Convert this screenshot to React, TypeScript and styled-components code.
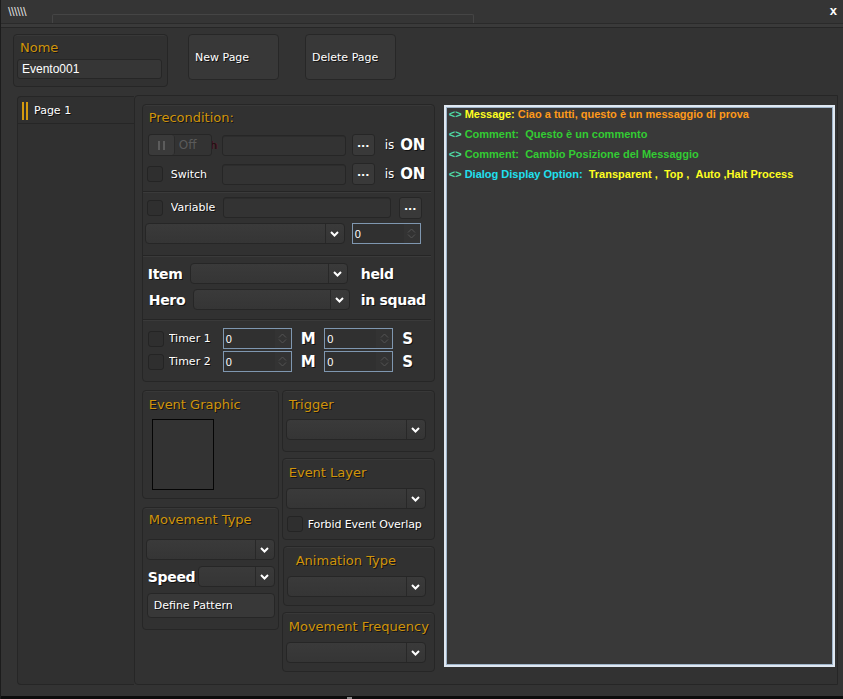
import React from "react";
import styled, { createGlobalStyle } from "styled-components";

const Global = createGlobalStyle`
  html, body {
    margin: 0;
    padding: 0;
    background: #333333;
  }
  body {
    font-family: "DejaVu Sans", Tahoma, sans-serif;
    font-size: 12px;
    color: #f0f0f0;
  }
`;

const Window = styled.div`
  width: 843px;
  height: 699px;
  background: #333333;
  border-left: 1px solid #1c1c1c;
  box-sizing: border-box;
  display: flex;
  flex-direction: column;
  position: relative;
  overflow: hidden;
`;

const TitleBar = styled.div`
  height: 23px;
  background: #353535;
  border-bottom: 1px solid #2a2a2a;
  display: flex;
  align-items: flex-start;
`;

const Grip = styled.span`
  margin: 5px 0 0 7px;
  font-family: "Liberation Sans", Arial, sans-serif;
  font-size: 13px;
  line-height: 13px;
  color: #d8d8d8;
  letter-spacing: -0.6px;
`;

const TabGhost = styled.div`
  margin: 14px 0 0 26px;
  width: 422px;
  height: 9px;
  border: 1px solid #454545;
  border-bottom: none;
  border-radius: 2px 2px 0 0;
  box-sizing: border-box;
`;

const Close = styled.span`
  margin: 3px 6px 0 auto;
  font-family: "Liberation Sans", Arial, sans-serif;
  font-weight: bold;
  font-size: 13px;
  color: #ffffff;
`;

const Strip = styled.div`
  height: 3px;
  background: #3a3a3a;
  border-bottom: 1px solid #262626;
`;

const Body = styled.div`
  flex: 1;
  padding: 6px 5px 0 12px;
  display: flex;
  flex-direction: column;
  border-bottom: 3px solid #0c0c0c;
  position: relative;
`;

const Notch = styled.span`
  position: absolute;
  left: 346px;
  bottom: -3px;
  width: 5px;
  height: 2px;
  background: #8a8a8a;
`;

const TopRow = styled.div`
  display: flex;
  align-items: flex-start;
  height: 62px;
`;

const Panel = styled.div<{ $w?: number; $h?: number }>`
  width: ${(p) => (p.$w ? `${p.$w}px` : "auto")};
  height: ${(p) => (p.$h ? `${p.$h}px` : "auto")};
  box-sizing: border-box;
  background: #313131;
  border: 1px solid #262626;
  border-radius: 4px;
  box-shadow: inset 0 1px 0 #383838;
`;

const Title = styled.div<{ $indent?: number }>`
  color: #cf940c;
  font-size: 13px;
  line-height: 16px;
  padding-left: ${(p) => p.$indent ?? 6}px;
  text-shadow: 1px 1px 0 #141414;
  white-space: nowrap;
`;

const NomePanel = styled(Panel)`
  padding-top: 5px;
`;

const NameInput = styled.div`
  margin: 3px 0 0 3px;
  width: 145px;
  height: 20px;
  box-sizing: border-box;
  background: #363636;
  border: 1px solid #262626;
  border-radius: 3px;
  padding-left: 4px;
  font-family: "Liberation Sans", Arial, sans-serif;
  font-size: 12px;
  line-height: 18px;
  color: #ffffff;
`;

const BigButton = styled.div<{ $ml: number }>`
  margin-left: ${(p) => p.$ml}px;
  width: 91px;
  height: 46px;
  box-sizing: border-box;
  background: #383838;
  border: 1px solid #272727;
  border-radius: 4px;
  display: flex;
  align-items: center;
  padding-left: 6px;
  font-size: 11px;
  color: #ffffff;
  text-shadow: 1px 1px 0 #111;
`;

const Lower = styled.div`
  display: flex;
  height: 589px;
`;

const PageList = styled.div`
  margin-left: 4px;
  width: 117px;
  box-sizing: border-box;
  background: #303030;
  border: 1px solid #262626;
  border-right: none;
  border-radius: 4px 0 0 4px;
  padding-top: 1px;
`;

const PageItem = styled.div`
  height: 25px;
  border-bottom: 1px solid #262626;
  display: flex;
  align-items: center;
  padding-left: 4px;
  gap: 6px;
  font-size: 11px;
  color: #ffffff;
  text-shadow: 1px 1px 0 #111;
`;

const Bars = styled.span`
  width: 6px;
  height: 18px;
  border-left: 2px solid #d49a0e;
  border-right: 2px solid #d49a0e;
  box-sizing: border-box;
`;

const Main = styled.div`
  width: 706px;
  box-sizing: border-box;
  background: #323232;
  border: 1px solid #262626;
  border-radius: 4px 0 0 4px;
  margin-top: -1px;
  padding: 8px 0 0 7px;
  display: flex;
  gap: 8px;
`;

const LeftCol = styled.div`
  width: 294px;
  display: flex;
  flex-direction: column;
`;

const PrePanel = styled(Panel)`
  width: 293px;
  height: 278px;
  padding-top: 5px;
`;

const Section = styled.div<{ $pt: number; $pb: number; $gap: number; $line?: boolean }>`
  padding: ${(p) => p.$pt}px 0 ${(p) => p.$pb}px 0;
  display: flex;
  flex-direction: column;
  gap: ${(p) => p.$gap}px;
  border-bottom: ${(p) => (p.$line ? "1px solid #252525" : "none")};
  box-shadow: ${(p) => (p.$line ? "0 1px 0 #3a3a3a" : "none")};
  margin: 0 3px 0 0;
`;

const Row = styled.div<{ $h?: number; $pl?: number }>`
  height: ${(p) => p.$h ?? 21}px;
  display: flex;
  align-items: center;
  padding-left: ${(p) => p.$pl ?? 4}px;
  position: relative;
`;

const Check = styled.span<{ $ml?: number; $hidden?: boolean }>`
  margin-left: ${(p) => p.$ml ?? 0}px;
  width: 16px;
  height: 16px;
  box-sizing: border-box;
  background: #2f2f2f;
  border: 1px solid #242424;
  border-radius: 3px;
  flex: none;
  visibility: ${(p) => (p.$hidden ? "hidden" : "visible")};
`;

const Label = styled.span<{ $w: number; $dark?: boolean; $indent?: number }>`
  width: ${(p) => p.$w}px;
  flex: none;
  box-sizing: border-box;
  padding-left: ${(p) => p.$indent ?? 0}px;
  font-size: 11px;
  color: ${(p) => (p.$dark ? "#1c1010" : "#ffffff")};
  text-shadow: ${(p) => (p.$dark ? "1px 0 0 #5a1020" : "1px 1px 0 #111")};
  white-space: nowrap;
  overflow: hidden;
`;

const Bold = styled.span<{ $w?: number; $size?: number }>`
  width: ${(p) => (p.$w ? `${p.$w}px` : "auto")};
  flex: none;
  font-family: "DejaVu Sans", Tahoma, sans-serif;
  font-weight: bold;
  font-size: ${(p) => p.$size ?? 14}px;
  color: #ffffff;
  text-shadow: 1px 1px 0 #111;
  white-space: nowrap;
  letter-spacing: -0.3px;
`;

const Field = styled.span<{ $w: number }>`
  width: ${(p) => p.$w}px;
  height: 21px;
  flex: none;
  box-sizing: border-box;
  background: #333333;
  border: 1px solid #262626;
  border-radius: 3px;
  box-shadow: inset 0 1px 0 #2c2c2c;
`;

const Dots = styled.span<{ $ml: number }>`
  margin-left: ${(p) => p.$ml}px;
  width: 23px;
  height: 22px;
  flex: none;
  box-sizing: border-box;
  background: #393939;
  border: 1px solid #262626;
  border-radius: 3px;
  color: #ffffff;
  font-weight: bold;
  font-size: 11px;
  display: flex;
  align-items: center;
  justify-content: center;
  padding-bottom: 3px;
`;

const Is = styled.span<{ $ml: number }>`
  margin-left: ${(p) => p.$ml}px;
  font-size: 12px;
  color: #ffffff;
  text-shadow: 1px 1px 0 #111;
  margin-right: 6px;
`;

const Toggle = styled.div`
  position: absolute;
  left: 5px;
  top: 0;
  width: 64px;
  height: 22px;
  box-sizing: border-box;
  background: #333333;
  border: 1px solid #262626;
  border-radius: 3px;
  display: flex;
  align-items: center;
`;

const Knob = styled.span`
  width: 26px;
  height: 20px;
  box-sizing: border-box;
  background: #3a3a3a;
  border-right: 1px solid #2a2a2a;
  border-radius: 3px;
  display: flex;
  align-items: center;
  justify-content: center;
  gap: 3px;
`;

const KnobBar = styled.span`
  width: 2px;
  height: 9px;
  background: #5c5c5c;
`;

const OffText = styled.span`
  margin-left: 4px;
  font-size: 12px;
  color: #5a5a5a;
`;

const Select = styled.div<{ $w: number; $ml?: number }>`
  margin-left: ${(p) => p.$ml ?? 0}px;
  width: ${(p) => p.$w}px;
  height: 21px;
  flex: none;
  box-sizing: border-box;
  background: linear-gradient(#3a3a3a, #353535);
  border: 1px solid #262626;
  border-radius: 4px;
  display: flex;
  justify-content: flex-end;
`;

const Arrow = styled.span`
  width: 18px;
  border-left: 1px solid #282828;
  display: flex;
  align-items: center;
  justify-content: center;
`;

const Spin = styled.div<{ $w?: number; $ml?: number }>`
  margin-left: ${(p) => p.$ml ?? 0}px;
  width: ${(p) => p.$w ?? 69}px;
  height: 21px;
  flex: none;
  box-sizing: border-box;
  background: #303030;
  border: 1px solid #7f97b0;
  display: flex;
  align-items: center;
  justify-content: space-between;
  padding-left: 2px;
  font-family: "Liberation Sans", Arial, sans-serif;
  font-size: 11px;
  color: #ffffff;
`;

const SpinBtns = styled.span`
  width: 16px;
  height: 19px;
  display: flex;
  flex-direction: column;
  align-items: center;
  justify-content: center;
  gap: 1px;
  background: #333;
`;

const Unit = styled(Bold)<{ $ml: number }>`
  margin-left: ${(p) => p.$ml}px;
  font-size: 15px;
`;

const BottomGrid = styled.div`
  margin-top: 8px;
  display: grid;
  grid-template-columns: 137px 153px;
  column-gap: 3px;
  align-items: start;
`;

const Stack = styled.div<{ $gap: number }>`
  display: flex;
  flex-direction: column;
  gap: ${(p) => p.$gap}px;
`;

const Box = styled(Panel)<{ $pt?: number }>`
  padding-top: ${(p) => p.$pt ?? 6}px;
  display: flex;
  flex-direction: column;
`;

const GraphicFrame = styled.div`
  margin: 6px 0 0 9px;
  width: 62px;
  height: 71px;
  box-sizing: border-box;
  border: 1px solid #050505;
  background: #333333;
`;

const BoxRow = styled.div<{ $mt: number; $pl?: number }>`
  margin-top: ${(p) => p.$mt}px;
  padding-left: ${(p) => p.$pl ?? 3}px;
  display: flex;
  align-items: center;
`;

const SmallText = styled.span<{ $ml?: number }>`
  margin-left: ${(p) => p.$ml ?? 0}px;
  font-size: 11px;
  color: #ffffff;
  text-shadow: 1px 1px 0 #111;
  white-space: nowrap;
  letter-spacing: -0.1px;
`;

const PatternBtn = styled.div`
  margin: 6px 0 0 4px;
  width: 128px;
  height: 25px;
  box-sizing: border-box;
  background: #383838;
  border: 1px solid #262626;
  border-radius: 4px;
  display: flex;
  align-items: center;
  padding-left: 6px;
  font-size: 11px;
  color: #ffffff;
  text-shadow: 1px 1px 0 #111;
`;

const EventList = styled.div`
  margin-top: 1px;
  width: 391px;
  height: 562px;
  box-sizing: border-box;
  background: #393939;
  border: 2px solid #dfe8f2;
  box-shadow: inset 0 0 0 1px #9fb4c9;
  padding: 0 0 0 3px;
  font-family: "Liberation Sans", Arial, sans-serif;
  font-weight: bold;
  font-size: 11px;
  line-height: 14px;
`;

const Line = styled.div`
  height: 20px;
  white-space: nowrap;
`;

const C = styled.span<{ $c: string }>`
  color: ${(p) => p.$c};
`;

const Chevron = () => (
  <svg width="9" height="6" viewBox="0 0 9 6">
    <path d="M1 1 L4.5 4.5 L8 1" stroke="#ffffff" strokeWidth="2" fill="none" />
  </svg>
);

const SpinArrows = () => (
  <SpinBtns>
    <svg width="9" height="5" viewBox="0 0 9 5">
      <path d="M1 4.5 L4.5 1 L8 4.5" stroke="#555" strokeWidth="1" fill="none" />
    </svg>
    <svg width="9" height="5" viewBox="0 0 9 5">
      <path d="M1 0.5 L4.5 4 L8 0.5" stroke="#555" strokeWidth="1" fill="none" />
    </svg>
  </SpinBtns>
);

const Dropdown = ({ w, ml }: { w: number; ml?: number }) => (
  <Select $w={w} $ml={ml}>
    <Arrow>
      <Chevron />
    </Arrow>
  </Select>
);

const Arrows = () => <C $c="#50d8a8">{"<>"} </C>;

export default function App() {
  return (
    <>
      <Global />
      <Window>
        <TitleBar>
          <Grip>\\\\\\</Grip>
          <TabGhost />
          <Close>x</Close>
        </TitleBar>
        <Strip />
        <Body>
          <TopRow>
            <NomePanel $w={155} $h={53}>
              <Title>Nome</Title>
              <NameInput>Evento001</NameInput>
            </NomePanel>
            <BigButton $ml={20}>New Page</BigButton>
            <BigButton $ml={26}>Delete Page</BigButton>
          </TopRow>
          <Lower>
            <PageList>
              <PageItem>
                <Bars />
                Page 1
              </PageItem>
            </PageList>
            <Main>
              <LeftCol>
                <PrePanel>
                  <Title>Precondition:</Title>
                  <Section $pt={8} $pb={6} $gap={7} $line>
                    <Row $h={22}>
                      <Check $hidden />
                      <Label $w={51} $dark $indent={10} style={{ marginLeft: 8 }}>
                        Switch
                      </Label>
                      <Toggle>
                        <Knob>
                          <KnobBar />
                          <KnobBar />
                        </Knob>
                        <OffText>Off</OffText>
                      </Toggle>
                      <Field $w={124} />
                      <Dots $ml={6}>...</Dots>
                      <Is $ml={10}>is</Is>
                      <Bold $size={15}>ON</Bold>
                    </Row>
                    <Row $h={22}>
                      <Check />
                      <Label $w={51} style={{ marginLeft: 8 }}>
                        Switch
                      </Label>
                      <Field $w={124} />
                      <Dots $ml={6}>...</Dots>
                      <Is $ml={10}>is</Is>
                      <Bold $size={15}>ON</Bold>
                    </Row>
                  </Section>
                  <Section $pt={5} $pb={11} $gap={5} $line>
                    <Row>
                      <Check />
                      <Label $w={52} style={{ marginLeft: 8 }}>
                        Variable
                      </Label>
                      <Field $w={168} />
                      <Dots $ml={8}>...</Dots>
                    </Row>
                    <Row $pl={2}>
                      <Dropdown w={200} />
                      <Spin $ml={7} $w={69}>
                        0
                        <SpinArrows />
                      </Spin>
                    </Row>
                  </Section>
                  <Section $pt={7} $pb={9} $gap={5} $line>
                    <Row $pl={5}>
                      <Bold $w={42}>Item</Bold>
                      <Dropdown w={158} />
                      <Bold $size={14} style={{ marginLeft: 13 }}>
                        held
                      </Bold>
                    </Row>
                    <Row $pl={6}>
                      <Bold $w={44}>Hero</Bold>
                      <Dropdown w={157} />
                      <Bold $size={14} style={{ marginLeft: 11 }}>
                        in squad
                      </Bold>
                    </Row>
                  </Section>
                  <Section $pt={8} $pb={0} $gap={2}>
                    <Row $pl={5}>
                      <Check />
                      <Label $w={54} style={{ marginLeft: 5 }}>
                        Timer 1
                      </Label>
                      <Spin>
                        0
                        <SpinArrows />
                      </Spin>
                      <Unit $ml={9}>M</Unit>
                      <Spin $ml={9}>
                        0
                        <SpinArrows />
                      </Spin>
                      <Unit $ml={9}>S</Unit>
                    </Row>
                    <Row $pl={5}>
                      <Check />
                      <Label $w={54} style={{ marginLeft: 5 }}>
                        Timer 2
                      </Label>
                      <Spin>
                        0
                        <SpinArrows />
                      </Spin>
                      <Unit $ml={9}>M</Unit>
                      <Spin $ml={9}>
                        0
                        <SpinArrows />
                      </Spin>
                      <Unit $ml={9}>S</Unit>
                    </Row>
                  </Section>
                </PrePanel>
                <BottomGrid>
                  <Stack $gap={8}>
                    <Box $h={109}>
                      <Title>Event Graphic</Title>
                      <GraphicFrame />
                    </Box>
                    <Box $h={123} $pt={4}>
                      <Title>Movement Type</Title>
                      <BoxRow $mt={11}>
                        <Dropdown w={129} />
                      </BoxRow>
                      <BoxRow $mt={6} $pl={5}>
                        <Bold $w={50}>Speed</Bold>
                        <Dropdown w={77} />
                      </BoxRow>
                      <PatternBtn>Define Pattern</PatternBtn>
                    </Box>
                  </Stack>
                  <Stack $gap={6}>
                    <Box $h={62}>
                      <Title>Trigger</Title>
                      <BoxRow $mt={6}>
                        <Dropdown w={140} />
                      </BoxRow>
                    </Box>
                    <Box $h={82}>
                      <Title>Event Layer</Title>
                      <BoxRow $mt={7}>
                        <Dropdown w={140} />
                      </BoxRow>
                      <BoxRow $mt={7} $pl={4}>
                        <Check />
                        <SmallText $ml={5}>Forbid Event Overlap</SmallText>
                      </BoxRow>
                    </Box>
                    <Box $h={60} style={{ marginLeft: 1 }}>
                      <Title $indent={12}>Animation Type</Title>
                      <BoxRow $mt={7}>
                        <Dropdown w={139} />
                      </BoxRow>
                    </Box>
                    <Box $h={60}>
                      <Title>Movement Frequency</Title>
                      <BoxRow $mt={7}>
                        <Dropdown w={140} />
                      </BoxRow>
                    </Box>
                  </Stack>
                </BottomGrid>
              </LeftCol>
              <EventList>
                <Line>
                  <Arrows />
                  <C $c="#ffff20">Message: </C>
                  <C $c="#ff9a1a">Ciao a tutti, questo è un messaggio di prova</C>
                </Line>
                <Line>
                  <Arrows />
                  <C $c="#33cc33">Comment: &nbsp;Questo è un commento</C>
                </Line>
                <Line>
                  <Arrows />
                  <C $c="#33cc33">Comment: &nbsp;Cambio Posizione del Messaggio</C>
                </Line>
                <Line>
                  <Arrows />
                  <C $c="#20e0f0">Dialog Display Option: &nbsp;</C>
                  <C $c="#ffff20">Transparent , &nbsp;Top , &nbsp;Auto ,Halt Process</C>
                </Line>
              </EventList>
            </Main>
          </Lower>
          <Notch />
        </Body>
      </Window>
    </>
  );
}
